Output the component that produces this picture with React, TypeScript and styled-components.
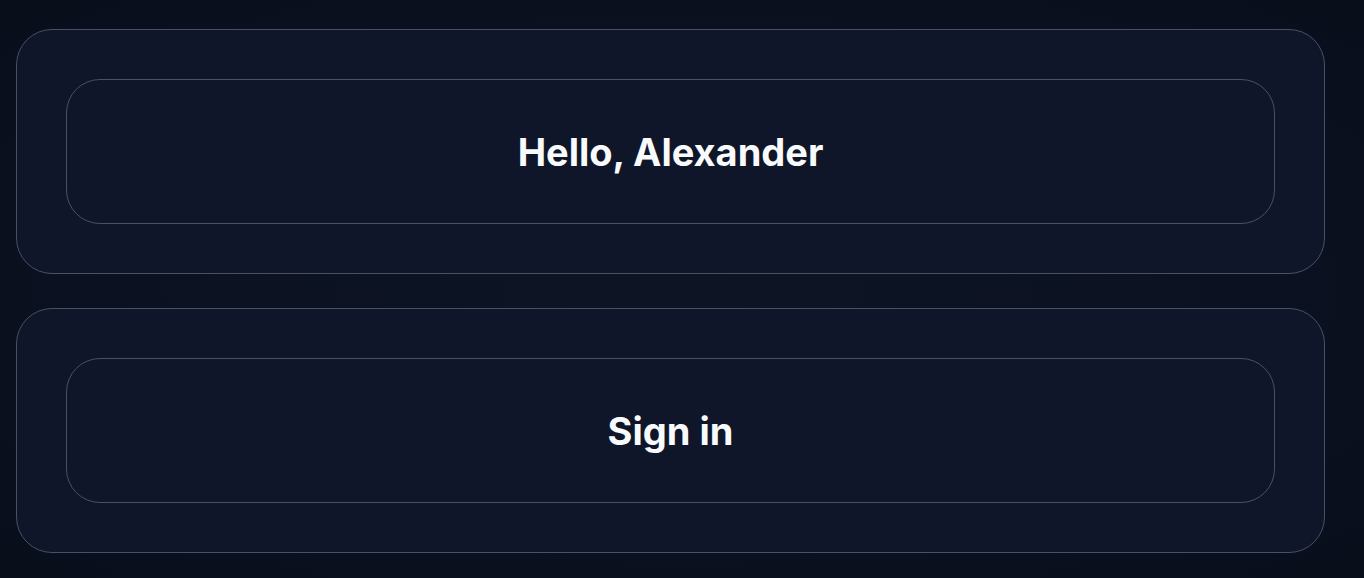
import * as React from "react";
import styled, { createGlobalStyle } from "styled-components";

const GlobalStyle = createGlobalStyle`
  html, body {
    margin: 0;
    padding: 0;
    background: #0b1120;
  }
  body {
    font-family: Inter, "Noto Sans", "Liberation Sans", sans-serif;
    -webkit-font-smoothing: antialiased;
  }
`;

const Page = styled.div`
  min-height: 578px;
  box-sizing: border-box;
  padding: 29px 39px 0 16px;
  display: flex;
  flex-direction: column;
  gap: 34px;
  background: radial-gradient(
    ellipse at 50% 50%,
    #0d1424 0%,
    #0b1120 60%,
    #090e1b 100%
  );
`;

const Card = styled.section`
  box-sizing: border-box;
  height: 245px;
  padding: 49px;
  border: 1px solid #465266;
  border-radius: 36px;
  background: #0f1629;
`;

const Panel = styled.div`
  box-sizing: border-box;
  height: 145px;
  display: flex;
  align-items: center;
  justify-content: center;
  border: 1px solid #465266;
  border-radius: 34px;
  background: #0f1629;
`;

const Title = styled.h2`
  margin: 0;
  color: #f8fafc;
  font-size: 38px;
  font-weight: 700;
  letter-spacing: 0;
`;

const items = ["Hello, Alexander", "Sign in"];

export default function App() {
  return (
    <>
      <GlobalStyle />
      <Page>
        {items.map((label) => (
          <Card key={label}>
            <Panel>
              <Title>{label}</Title>
            </Panel>
          </Card>
        ))}
      </Page>
    </>
  );
}
